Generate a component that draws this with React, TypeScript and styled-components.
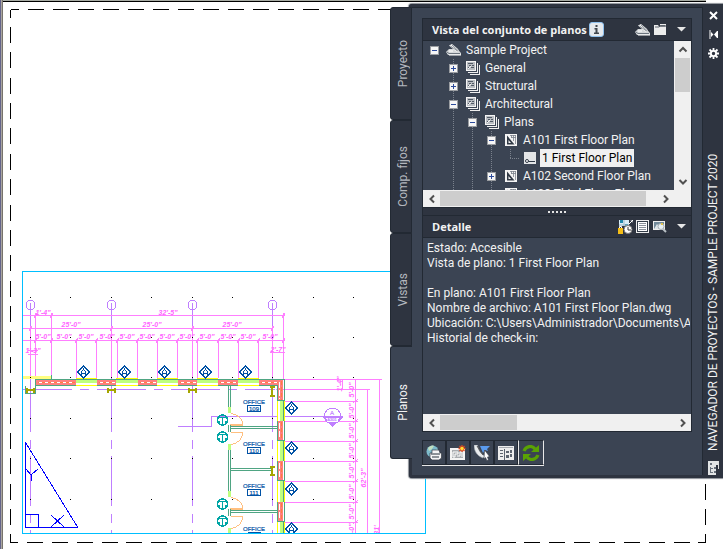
import React from "react";
import styled, { createGlobalStyle, css } from "styled-components";

const c = {
  panel: "#3b4453",
  frame: "#2e3440",
  edge: "#222933",
  text: "#f2f2f2",
  track: "#f0f0f0",
  thumb: "#cdcdcd",
};
const font = `Roboto, "Open Sans", sans-serif`;

const GlobalStyle = createGlobalStyle`
  * { box-sizing: border-box; }
  body { margin: 0; background: #fff; font-family: ${font}; font-size: 12px; }
  button { font: inherit; color: inherit; padding: 0; border: 0; background: none; }
`;

const Workspace = styled.main`
  position: relative;
  min-height: 100vh;
  overflow: hidden;
`;
const Canvas = styled.svg`
  position: absolute;
  inset: 0;
  width: 100%;
  height: 100%;
  display: block;
`;
const Palette = styled.section`
  position: absolute;
  top: 4px;
  left: 390px;
  right: 0;
  display: flex;
  align-items: flex-start;
  color: ${c.text};
`;
const TabList = styled.div`
  position: relative;
  z-index: 1;
  width: 22px;
  margin: 3px -3px 0 0;
  display: flex;
  flex-direction: column;
`;
const Tab = styled.button<{ $active?: boolean }>`
  height: 113px;
  padding-left: 3px;
  display: flex;
  align-items: center;
  justify-content: center;
  border: 1px solid ${c.edge};
  border-radius: 3px 0 0 3px;
  background: ${c.frame};
  color: #b4b8bf;
  span {
    writing-mode: vertical-rl;
    transform: rotate(180deg);
    font-size: 12px;
    line-height: 16px;
  }
  ${(p) =>
    p.$active &&
    css`
      background: ${c.panel};
      border-right: 0;
      color: ${c.text};
    `}
`;
const Body = styled.div`
  flex: 1;
  min-width: 0;
  display: flex;
  border: 3px solid ${c.frame};
  border-right: 0;
  border-radius: 3px 0 0 3px;
  background: ${c.frame};
  box-shadow: 0 0 1px 1px #8b8f96;
`;
const Main = styled.div`
  flex: 1;
  min-width: 0;
  padding: 10px 10px 9px;
  background: ${c.panel};
  border-top: 1px solid ${c.edge};
  border-right: 1px solid ${c.edge};
`;
const Strip = styled.aside`
  width: 20px;
  display: flex;
  flex-direction: column;
  align-items: center;
  gap: 2px;
`;
const StripButton = styled.button`
  width: 17px;
  height: 17px;
  display: grid;
  place-items: center;
`;
const StripTitle = styled.h1`
  flex: 1;
  margin: 0;
  padding-top: 8px;
  writing-mode: vertical-rl;
  transform: rotate(180deg);
  font-weight: 400;
  font-size: 12px;
  line-height: 18px;
  white-space: nowrap;
`;
const Panels = styled.div`
  border: 1px solid ${c.edge};
`;
const Header = styled.header`
  height: 22px;
  padding: 0 3px 0 9px;
  display: flex;
  align-items: center;
  gap: 2px;
  background: ${c.frame};
  border-bottom: 1px solid ${c.edge};
`;
const Heading = styled.h2`
  margin: 0;
  font-family: "Open Sans", sans-serif;
  font-size: 11px;
  font-weight: 700;
  white-space: nowrap;
`;
const HeaderTools = styled.div`
  margin-left: auto;
  display: flex;
  align-items: center;
  gap: 2px;
`;
const IconButton = styled.button`
  display: grid;
  place-items: center;
  width: 15px;
  height: 16px;
`;
const MenuButton = styled(IconButton)`
  margin-left: 6px;
  width: 13px;
`;
const TreeArea = styled.div`
  height: 149px;
  display: flex;
  background: ${c.panel};
`;
const Tree = styled.ul`
  flex: 1;
  min-width: 0;
  margin: 0;
  padding: 0 0 0 2px;
  list-style: none;
  overflow: hidden;
`;
const Row = styled.li`
  height: 18px;
  display: flex;
  align-items: center;
`;
const dots = `#7b828d 0 1px, transparent 1px 2px`;
const Guide = styled.span<{ $line?: boolean; $elbow?: boolean }>`
  flex: none;
  width: 19px;
  height: 18px;
  display: grid;
  place-items: center;
  background-repeat: no-repeat;
  ${(p) =>
    p.$line &&
    css`
      background-image: repeating-linear-gradient(to bottom, ${dots});
      background-size: 1px 18px;
      background-position: 9px 0;
    `}
  ${(p) =>
    p.$elbow &&
    css`
      background-image: repeating-linear-gradient(to bottom, ${dots}),
        repeating-linear-gradient(to right, ${dots});
      background-size: 1px 9px, 10px 1px;
      background-position: 9px 0, 9px 9px;
    `}
`;
const Toggle = styled.button`
  width: 9px;
  height: 9px;
  display: grid;
  background: #f4f4f4;
  svg { display: block; }
`;
const NodeIcon = styled.span`
  flex: none;
  width: 19px;
  height: 18px;
  display: grid;
  place-items: center;
`;
const Label = styled.span<{ $selected?: boolean }>`
  margin-left: 1px;
  padding: 0 2px;
  line-height: 18px;
  white-space: nowrap;
  ${(p) => p.$selected && css`background: #f0f0f0; color: #000;`}
`;
const HBar = styled.div`
  height: 17px;
  display: flex;
  align-items: center;
  background: ${c.track};
`;
const VBar = styled.div`
  width: 17px;
  display: flex;
  flex-direction: column;
  background: ${c.track};
`;
const Arrow = styled.button`
  width: 17px;
  height: 17px;
  display: grid;
  place-items: center;
`;
const HTrack = styled.div`
  flex: 1;
  height: 15px;
`;
const HThumb = styled.div<{ $size: string }>`
  width: ${(p) => p.$size};
  height: 100%;
  background: ${c.thumb};
`;
const VTrack = styled.div`
  flex: 1;
  padding: 0 1px;
`;
const VThumb = styled.div`
  height: 34px;
  background: ${c.thumb};
`;
const Corner = styled.div`
  width: 17px;
`;
const Splitter = styled.div`
  height: 9px;
  display: flex;
  align-items: center;
  justify-content: center;
  gap: 2px;
  background: ${c.frame};
  border: solid ${c.edge};
  border-width: 1px 0;
  i { width: 2px; height: 2px; background: #e4e4e4; }
`;
const Detail = styled.div`
  height: 176px;
  padding: 3px 1px 0 4px;
  overflow: hidden;
  background: ${c.panel};
  p { margin: 0; min-height: 15px; line-height: 15px; white-space: nowrap; overflow: hidden; }
`;
const Toolbar = styled.div`
  margin-top: 8px;
  width: max-content;
  display: flex;
  border-bottom: 1px solid #e8e8e8;
`;
const ToolButton = styled.button<{ $raised?: boolean }>`
  width: 24px;
  height: 25px;
  display: grid;
  place-items: center;
  border: 1px solid ${c.edge};
  ${(p) =>
    p.$raised &&
    css`
      width: 26px;
      border-color: ${c.edge} #e8e8e8;
    `}
`;

/* ---------- icons ---------- */

const Chevron = ({ dir }: { dir: "left" | "right" | "up" | "down" }) => {
  const d = {
    left: "M7 1.5 3.5 5 7 8.5",
    right: "M3 1.5 6.500 5 3 8.500",
    up: "M1.500 6.500 5 3 8.500 6.500",
    down: "M1.500 3 5 6.500 8.500 3",
  }[dir];
  return (
    <svg width="10" height="10" viewBox="0 0 10 10">
      <path d={d} fill="none" stroke="#505050" strokeWidth="2" />
    </svg>
  );
};
const Caret = () => (
  <svg width="9" height="5" viewBox="0 0 9 5"><path d="M0 0h9L4.500 4.500z" fill="#e6e6e6" /></svg>
);
const ToggleGlyph = ({ open }: { open: boolean }) => (
  <svg width="9" height="9" shapeRendering="crispEdges">
    <rect x=".5" y=".5" width="8" height="8" fill="#f6f6f6" stroke="#9a9da1" />
    <path d={open ? "M2 4.500h5" : "M2 4.500h5M4.500 2v5"} stroke="#2b4a9b" />
  </svg>
);
const ProjectIcon = () => (
  <svg width="15" height="12" viewBox="0 0 15 12">
    <path d="M0 8 3 5h8l4 4v2H2z" fill="#d5d8da" />
    <path d="m1 8 2 1.500h11" stroke="#6c747e" fill="none" />
    <path d="M3 1.500 6 0l6 5 1.500 3L10 7.500z" fill="#f4f4f4" />
    <path d="m4.500 2 7 5M6 1l6.500 6" stroke="#5c6570" strokeWidth=".7" />
    <path d="M3 7h4M3 11h12" stroke="#fff" />
  </svg>
);
const SubsetIcon = () => (
  <svg width="14" height="14" shapeRendering="crispEdges">
    <path d="M13.500 4v9.500H4M11.500 2v9.500H2" fill="none" stroke="#f0f0f0" />
    <path d="M0 0h10v10H0z" fill="#f4f4f4" />
    <path d="M1 1h8v8H1z" fill="#b9bdc2" />
    <path d="M2 2h5v1H2zM3 4h2v1H3zM6 4h2v1H6zM2 6h1v2H2zM5 6h3v1H5z" fill="#515a66" />
    <path d="m2 8 3-3" stroke="#f4f4f4" />
  </svg>
);
const SheetIcon = () => (
  <svg width="12" height="12">
    <path d="M0 0h12v12H0z" fill="#f4f4f4" />
    <path d="M2 1.500 9.500 10.500H2z" fill="#303945" />
    <path d="M3.500 6v3h2.500z" fill="#f4f4f4" />
    <path d="M5 1.500h6M6 3.500h5M8.500 1v6M10.500 1v9M6.500 1v3" stroke="#7b828c" strokeWidth=".8" />
  </svg>
);
const ViewIcon = () => (
  <svg width="12" height="12">
    <path d="M0 0h12v12H0z" fill="#e4e6e8" />
    <circle cx="3" cy="9" r="1.500" fill="#fff" stroke="#2f3946" />
    <path d="M4.500 9.500H11" stroke="#2f3946" />
  </svg>
);
const InfoIcon = () => (
  <svg width="15" height="15" viewBox="0 0 15 15">
    <rect x=".5" y=".5" width="14" height="14" rx="2.500" fill="#e5e9ed" stroke="#8fc1ef" />
    <path d="M6.500 3h2v2h-2zM5.500 6h3v4.500h1.500V12H5v-1.500h1.500v-3h-1z" fill="#41474e" />
  </svg>
);
const FolderIcon = () => (
  <svg width="12" height="11" viewBox="0 0 12 11">
    <path d="M0 1h4l1 1.500h7V11H0z" fill="#ededed" />
    <path d="M6 0h6v1.500H6z" fill="#ededed" />
    <path d="M1 3h4l1.500-1.200H11" stroke="#3a424e" strokeWidth=".8" fill="none" />
  </svg>
);
const StatusIcon = () => (
  <svg width="15" height="14" viewBox="0 0 15 14">
    <path d="M1 0h10v6H1z" fill="#d9edf7" />
    <path d="M2 0h3v3H2zM7 4h3v3H7z" fill="#1f88ad" />
    <path d="M1 5h10M6 0v6" stroke="#9fb9c7" />
    <path d="M0 8h5v6H0z" fill="#f4bd16" /><path d="M1.500 8V6.500h2V8" stroke="#fff" fill="none" />
    <circle cx="10" cy="9.500" r="4" fill="#fff" stroke="#777" />
    <path d="M10 7v3h3" stroke="#333" fill="none" />
    <path d="M11 4 15 0M12.500 0H15v2.500" stroke="#fff" fill="none" />
  </svg>
);
const DetailIcon = () => (
  <svg width="13" height="13" shapeRendering="crispEdges">
    <path d="M0 0h13v13H0z" fill="#eee" /><rect x="1.500" y="1.500" width="10" height="10" fill="#fff" stroke="#343d49" />
    <path d="M3 3.500h7M3 5.500h7M3 7.500h7M3 9.500h7" stroke="#8a9099" />
  </svg>
);
const PreviewIcon = () => (
  <svg width="14" height="13" viewBox="0 0 14 13">
    <path d="M0 1h12v9H0z" fill="#eee" /><path d="M1 2h10v7H1z" fill="#71899a" />
    <path d="m1 9 3-5 4 5z" fill="#dce4e8" />
    <circle cx="8" cy="6.500" r="3" fill="#e8f0f3" stroke="#a5adb3" /><path d="m10 9 3 3" stroke="#b9c0c5" strokeWidth="2" />
    <path d="M8 3h2v2H8z" fill="#e2c34d" />
  </svg>
);
const CloseIcon = () => (
  <svg width="9" height="9"><path d="m1 1 7 7M8 1 1 8" stroke="#fff" strokeWidth="2" /></svg>
);
const HideIcon = () => (
  <svg width="9" height="9"><path d="M1 0v9M8.500 1v7" stroke="#fff" /><path d="M2 2v5l2.500-2.500zM8 1v7L5 4.500z" fill="#fff" /></svg>
);
const GearIcon = () => (
  <svg width="11" height="11" viewBox="0 0 11 11">
    <path d="M5.500 0v11M0 5.500h11M1.500 1.500l8 8M9.500 1.500l-8 8" stroke="#fff" strokeWidth="1.800" />
    <circle cx="5.500" cy="5.500" r="2.600" fill={c.frame} stroke="#fff" strokeWidth="1.800" />
  </svg>
);
const NavigatorIcon = () => (
  <svg width="11" height="14" shapeRendering="crispEdges">
    <path d="M0 0h11v4H8v10H0z" fill="#e2e4e5" /><path d="M10 0v8" stroke="#ddd" />
    <path d="M2 2h2v2H2zM2 6h1v6H2zM6 6h2v2H6zM6 10h2v2H6zM3 7h2v1H3zM3 11h2v1H3z" fill="#68707b" />
  </svg>
);
const PublishIcon = () => (
  <svg width="16" height="16" viewBox="0 0 16 16">
    <circle cx="6.500" cy="6.500" r="6" fill="#7dbbcb" />
    <path d="M2 3c2-2 4-3 6-2L6 4 3 6zM7 7l4-3 1 3-3 2z" fill="#c0dfc0" />
    <path d="M6 5h7l1 3h1.500v5L13 15H6l-2-2V8h2z" fill="#f5f5f5" stroke="#343b45" strokeWidth=".7" />
    <path d="M5 9h9M6 12h7" stroke="#27303b" />
  </svg>
);
const NewSheetIcon = () => (
  <svg width="16" height="16" viewBox="0 0 16 16">
    <path d="M0 3h15v12H0z" fill="#f4f4f4" /><path d="M2 5h11v8H2z" fill="#a9adb1" />
    <path d="M3 7h5v2H5v3H3zM7 11h3V7h2v5" fill="none" stroke="#fff" />
    <path d="M12 0v7M8.500 3.500h7M9.500 1l5 5M14.500 1l-5 5" stroke="#e3481d" strokeWidth="1.300" /><circle cx="12" cy="3.500" r="1.700" fill="#ffdc34" />
  </svg>
);
const EtransmitIcon = () => (
  <svg width="16" height="16" viewBox="0 0 16 16">
    <path d="M0 0c0 6 3 11 9 13l2-2C7 9 4 5 3.500 0z" fill="#e8ebed" stroke="#9aa2a9" strokeWidth=".6" />
    <path d="m3 1 6 9" stroke="#555" /><path d="M6 1h10l-3 3 1 2-3-1-2 3z" fill="#5a9bee" />
    <path d="m10.500 5 5 6.500-2 .5 1 3-1.700.6-1.200-3-1.600 1.400z" fill="#fff" stroke="#353d48" strokeWidth=".6" />
  </svg>
);
const LayoutIcon = () => (
  <svg width="16" height="14" shapeRendering="crispEdges">
    <path d="M0 0h16v14H0z" fill="#eee" /><path d="M1 1h14v1H1z" fill="#a9adb1" />
    <path d="M2 4h3v1H2zM2 7h3v1H2zM2 10h3v1H2zM6 3h1v11H6zM8 5h3v2H8zM12 4h2v3h-2zM8 9h3v3H8zM12 8h2v3h-2z" fill="#5c646f" />
  </svg>
);
const RefreshIcon = () => (
  <svg width="18" height="16" viewBox="0 0 18 16">
    <path d="M2 6C4 1 10 0 13 4M16 10c-2 5-8 6-11 2" fill="none" stroke="#5aa303" strokeWidth="3.200" />
    <path d="M17 0v7H9zM1 16V9h8z" fill="#5aa303" />
  </svg>
);

/* ---------- drawing ---------- */

const MAG = "#ff7fff";
const PUR = "#bf7fff";
const GRN = "#4fa583";
const BLU = "#0052a5";
const gridX = [30, 111, 192, 272];
const dimX = [35, 51, 76, 96, 117, 137, 157, 177, 197, 218, 238, 258, 283];
const dimY = [401, 421, 441, 461, 481, 502, 522];
const hWalls = [[36, 76], [97, 116], [138, 157], [178, 197], [218, 238], [259, 283]];
const hWindows = [[76, 97], [116, 138], [157, 178], [197, 218], [238, 259]];
const vWalls = [[380, 401], [421, 441], [461, 481], [502, 522]];
const vWindows = [[401, 421], [441, 461], [481, 502], [522, 533]];

const DimText = ({ x, y, t, up }: { x: number; y: number; t: string; up?: boolean }) => (
  <text x={x} y={y} textAnchor="middle" transform={up ? `rotate(-90 ${x} ${y})` : undefined}>{t}</text>
);
const WindowTag = ({ x, y }: { x: number; y: number }) => (
  <g fill="none" stroke={BLU} shapeRendering="crispEdges">
    <path d={`M${x + 0.5} ${y - 6}l6 6-6 6-6-6z`} />
    <path d={`M${x - 1.5} ${y + 3}v-3l2-3 2 3v3m-4-2h4`} />
  </g>
);
const Drawing = () => (
  <Canvas viewBox="0 0 723 549" preserveAspectRatio="xMinYMin slice" role="img" aria-label="First Floor Plan">
    <defs><clipPath id="vp"><path d="M22 271h404v262H22z" /></clipPath></defs>
    <g shapeRendering="crispEdges">
      <path d="M3 0h703v1H3z" fill="#a7aba3" />
      <path d="M3 1h703v1H3z" />
      <path d="M0 0h1v549H0z" fill="#64648a" /><path d="M1 0h1v549H1z" fill="#aaa6a0" /><path d="M2 0h1v549H2z" fill="#77736c" />
      <g fill="none" stroke="#000">
        <path d="M10.500 18V10M11 9.500h8M10.500 534v8M10 542.500h8M705.500 534v9M698 542.500h8" />
        <path d="M28 9.500H398" strokeDasharray="16 9" />
        <path d="M10.500 27V530" strokeDasharray="16 9.370" />
        <path d="M27 542.500H694" strokeDasharray="16 8.870" />
        <path d="M705.500 484v46" strokeDasharray="16 9" />
      </g>
    </g>
    <g clipPath="url(#vp)">
      <g shapeRendering="crispEdges" fill="none">
        <g stroke={PUR}>
          {gridX.map((x) => <path key={x} d={`M${x + 0.5} 303V432m0 8v9m0 7v50m0 8v9m0 7v4`} />)}
          <path d="M23 389.500h252" strokeDasharray="49 8 9 8" />
          <path d="M178 426.500h33v-10h132" />
        </g>
        <g stroke={MAG}>
          <path d="M23 315.500h262M23 328.500h250M23 340.500h262M270 352.500h15M28 350.500h10M28 354.500h10" />
          {dimX.map((x, i) => <path key={x} d={`M${x + 0.5} ${i < 2 || i === 12 ? 313 : 340}v${i < 2 || i === 12 ? 66 : 38}`} />)}
          {gridX.map((x) => <path key={x} d={`M${x + 0.5} 326V378`} />)}
          <path d="M285 379.500h97M276 389.500h94M342.500 379v11M355.500 379v154M367.500 389v144M379.500 379v154" />
          {dimY.map((y) => <path key={y} d={`M285 ${y + 0.5}h73M353 ${y + 2}l5-4`} />)}
          {dimX.map((x) => <path key={x} d={`M${x - 1} 343l3-5`} />)}
          {[35, 51, 283].map((x) => <path key={x} d={`M${x - 1} 318l3-5`} />)}
          {gridX.map((x) => <path key={x} d={`M${x - 1} 331l3-5`} />)}
        </g>
        <path d="M23 376h28v3H23z" fill="#ffff7f" />
        <path d="M35 379.500h249v154M35 385.500h242v148M35.500 379v7M51 375v4" stroke={GRN} />
        {hWalls.map(([a, b]) => (
          <g key={a}>
            <path d={`M${a} 380h${b - a}v5H${a}z`} fill="#ff7f7f" />
            <path d={`M${a + 2} 382.500H${b - 1}`} stroke="#ff7f3f" />
            <path d={`M${a + 3} 382.500H${b - 1}`} stroke="#fff" strokeDasharray="3 3" />
          </g>
        ))}
        {hWindows.map(([a, b]) => (
          <g key={a}>
            <path d={`M${a} 380h${b - a}v6H${a}z`} fill="#fff" />
            <path d={`M${a} 380h${b - a}v3H${a}z`} fill="#bfff7f" />
            <path d={`M${a} 378.500h${b - a}M${a} 385.500h${b - a}`} stroke="#ff0" />
            <path d={`M${a} 379.500h${b - a}`} stroke={GRN} />
          </g>
        ))}
        {vWalls.map(([a, b]) => (
          <g key={a}>
            <path d={`M278 ${a}h5V${b}h-5z`} fill="#ff7f7f" />
            <path d={`M281.500 ${a + 1}V${b - 1}`} stroke="#ff7f3f" strokeDasharray="4 2" />
            <path d={`M279.500 ${a + 2}V${b - 2}`} stroke="#fff" strokeDasharray="6 2" />
            <path d={`M277 ${b - 0.5}h7`} stroke={GRN} />
          </g>
        ))}
        {vWindows.map(([a, b]) => (
          <g key={a}>
            <path d={`M277 ${a}h7V${b}h-7z`} fill="#fff" />
            <path d={`M280 ${a}h3V${b}h-3z`} fill="#bfff7f" />
            <path d={`M283.500 ${a}V${b}`} stroke={GRN} />
            <path d={`M277.500 ${a}V${b}M284.500 ${a}V${b}`} stroke="#ff0" />
          </g>
        ))}
        <g stroke={GRN}>
          <path d="M228.500 386v21M230.500 386v21M228.500 425v7M230.500 425v7M228.500 450v41M230.500 450v41M228.500 509v7M230.500 509v7" />
          <path d="M231 426.500h46M231 428.500h46M231 468.500h40M231 470.500h40M231 510.500h46M231 512.500h46M25.500 386v7h10v-7" />
        </g>
        <path d="M228 407h3v6h-3zM228 444h3v6h-3zM228 491h3v6h-3zM228 528h3v6h-3z" fill="#bfff7f" />
        <g stroke="#ffbf7f">
          <path d="M231 413.500q11 2 12 11h-13M231 444.500q11-2 12-12h-12M231 497.500q11 2 12 11h-13M231 528.500q11-2 12-12h-12M231 425.500h12M231 509.500h12" />
        </g>
        <g stroke="#a5a500">
          {[30, 111, 192].map((x) => <path key={x} d={`M${x - 4} 390h9`} strokeWidth="2" />)}
          {[30, 111, 192].map((x) => <path key={x} d={`M${x - 3} 388v5M${x + 4} 388v5`} strokeWidth="2" />)}
          <path d="M272 387v9M272 467v9M270 387h5M270 396h5M270 467h5M270 475h5" strokeWidth="2" />
        </g>
        <g stroke={BLU}>
          <path d="M247.500 405.500h13v6h-13zM247.500 447.500h13v6h-13zM247.500 489.500h13v6h-13zM247.500 532.500h13" />
        </g>
        <path d="M25.500 442.500l52 84.500H25.500zM25.500 514.500h13v13M26 469l5 6 7-6M31.500 475v6M51 515l13 12M64 515l-13 12" stroke="#00f" />
        {[297, 337, 377, 418, 458, 499].map((y) =>
          [30, 70, 111, 151, 192, 232, 272, 313, 353].map((x) => <path key={`${x}-${y}`} d={`M${x} ${y}h1v1h-1z`} fill="#000" />)
        )}
      </g>
      <g fill="none" stroke={PUR} shapeRendering="crispEdges">
        {gridX.map((x) => <circle key={x} cx={x + 0.5} cy="305" r="4.500" />)}
        <circle cx="332.500" cy="416" r="8" />
        <path d="M323 417h20l-10.500 9z" fill={PUR} />
        <path d="M325 417h15l-2 5h-11z" fill="#fff" />
      </g>
      {[83, 124, 164, 205, 245].map((x) => <WindowTag key={x} x={x} y={372} />)}
      {[408, 448, 489, 529].map((y) => <WindowTag key={y} x={291} y={y} />)}
      <g fill="none" stroke="#00a5a5" shapeRendering="crispEdges">
        {[420, 437, 504, 521].map((y) => (
          <g key={y}><circle cx="222.500" cy={y} r="5" strokeWidth="1.500" /><path d={`M219 ${y - 2.5}h7M222.500 ${y - 2}v6M219.500 ${y + 1}v2M225.500 ${y + 1}v2`} /></g>
        ))}
      </g>
      <g fontFamily="Liberation Sans, sans-serif" fontSize="7" fontStyle="italic" fontWeight="700" fill="#ff66ff">
        <DimText x={43} y={315} t="1'-4&quot;" /><DimText x={168} y={315} t="32'-5&quot;" />
        {[71, 152, 232].map((x) => <DimText key={x} x={x} y={327} t="25'-0&quot;" />)}
        {[43, 64, 86, 107, 127, 147, 167, 187, 207, 228, 248, 270].map((x) => <DimText key={x} x={x} y={339} t="5'-0&quot;" />)}
        <DimText x={33} y={353} t="1'-3&quot;" /><DimText x={278} y={352} t="2'-7&quot;" />
        {[390, 411, 431, 451, 471, 492, 512, 531].map((y) => <DimText key={y} x={354} y={y} t="5'-0&quot;" up />)}
        <DimText x={342} y={384} t="1'-4&quot;" up /><DimText x={366} y={478} t="62'-3&quot;" up /><DimText x={379} y={530} t="81'" up />
      </g>
      <g fontFamily="Liberation Sans, sans-serif" fontSize="6" textAnchor="middle" fill={BLU} stroke={BLU} strokeWidth=".2">
        {[404, 446, 488, 531].map((y) => <text key={y} x="254" y={y}>OFFICE</text>)}
        <text x="254" y="411">109</text><text x="254" y="453">110</text><text x="254" y="495">111</text>
        <text x="332" y="415" fill={PUR} stroke={PUR}>A</text><text x="332" y="421" fontSize="4" fill={PUR} stroke={PUR}>A301</text>
      </g>
    </g>
    <path d="M22.500 271.500h403v262h-403z" fill="none" stroke="#00bfff" shapeRendering="crispEdges" />
  </Canvas>
);

/* ---------- palette data ---------- */

type Node = { level: number; label: string; icon: React.ReactNode; open?: boolean; selected?: boolean };
const nodes: Node[] = [
  { level: 0, label: "Sample Project", icon: <ProjectIcon />, open: true },
  { level: 1, label: "General", icon: <SubsetIcon />, open: false },
  { level: 1, label: "Structural", icon: <SubsetIcon />, open: false },
  { level: 1, label: "Architectural", icon: <SubsetIcon />, open: true },
  { level: 2, label: "Plans", icon: <SubsetIcon />, open: true },
  { level: 3, label: "A101 First Floor Plan", icon: <SheetIcon />, open: true },
  { level: 4, label: "1 First Floor Plan", icon: <ViewIcon />, selected: true },
  { level: 3, label: "A102 Second Floor Plan", icon: <SheetIcon />, open: false },
  { level: 3, label: "A103 Third Floor Plan", icon: <SheetIcon />, open: false },
];
const details = [
  "Estado: Accesible",
  "Vista de plano: 1 First Floor Plan",
  "",
  "En plano: A101 First Floor Plan",
  "Nombre de archivo: A101 First Floor Plan.dwg",
  "Ubicación: C:\\Users\\Administrador\\Documents\\A",
  "Historial de check-in:",
];
const tabs = ["Proyecto", "Comp. fijos", "Vistas", "Planos"];
const tools: [string, React.ReactNode][] = [
  ["Publicar", <PublishIcon />],
  ["Nuevo plano", <NewSheetIcon />],
  ["Transmitir", <EtransmitIcon />],
  ["Propiedades", <LayoutIcon />],
  ["Actualizar", <RefreshIcon />],
];

const TreeRow = ({ node }: { node: Node }) => (
  <Row role="treeitem" aria-level={node.level + 1} aria-expanded={node.open} aria-selected={!!node.selected}>
    {Array.from({ length: node.level }, (_, i) => <Guide key={i} $line={i > 0} />)}
    <Guide $line={node.level > 0 && node.open !== undefined} $elbow={node.open === undefined}>
      {node.open !== undefined && (
        <Toggle aria-label={node.open ? "Contraer" : "Expandir"}><ToggleGlyph open={node.open} /></Toggle>
      )}
    </Guide>
    <NodeIcon>{node.icon}</NodeIcon>
    <Label $selected={node.selected}>{node.label}</Label>
  </Row>
);

export default function App() {
  return (
    <>
      <GlobalStyle />
      <Workspace>
        <Drawing />
        <Palette aria-label="Navegador de proyectos">
          <TabList role="tablist" aria-orientation="vertical">
            {tabs.map((t) => (
              <Tab key={t} role="tab" aria-selected={t === "Planos"} $active={t === "Planos"}><span>{t}</span></Tab>
            ))}
          </TabList>
          <Body>
            <Main>
              <Panels>
                <Header>
                  <Heading>Vista del conjunto de planos</Heading>
                  <InfoIcon />
                  <HeaderTools>
                    <IconButton aria-label="Editar proyecto"><ProjectIcon /></IconButton>
                    <IconButton aria-label="Abrir"><FolderIcon /></IconButton>
                    <MenuButton aria-label="Opciones"><Caret /></MenuButton>
                  </HeaderTools>
                </Header>
                <TreeArea>
                  <Tree role="tree">{nodes.map((n) => <TreeRow key={n.label} node={n} />)}</Tree>
                  <VBar>
                    <Arrow aria-label="Subir"><Chevron dir="up" /></Arrow>
                    <VTrack><VThumb /></VTrack>
                    <Arrow aria-label="Bajar"><Chevron dir="down" /></Arrow>
                  </VBar>
                </TreeArea>
                <HBar>
                  <Arrow aria-label="Izquierda"><Chevron dir="left" /></Arrow>
                  <HTrack><HThumb $size="95%" /></HTrack>
                  <Arrow aria-label="Derecha"><Chevron dir="right" /></Arrow>
                  <Corner />
                </HBar>
                <Splitter><i /><i /><i /><i /><i /></Splitter>
                <Header>
                  <Heading>Detalle</Heading>
                  <HeaderTools>
                    <IconButton aria-label="Estado"><StatusIcon /></IconButton>
                    <IconButton aria-label="Detalles"><DetailIcon /></IconButton>
                    <IconButton aria-label="Vista previa"><PreviewIcon /></IconButton>
                    <MenuButton aria-label="Opciones de detalle"><Caret /></MenuButton>
                  </HeaderTools>
                </Header>
                <Detail>{details.map((d, i) => <p key={i}>{d}</p>)}</Detail>
                <HBar>
                  <Arrow aria-label="Izquierda"><Chevron dir="left" /></Arrow>
                  <HTrack><HThumb $size="33%" /></HTrack>
                  <Arrow aria-label="Derecha"><Chevron dir="right" /></Arrow>
                </HBar>
              </Panels>
              <Toolbar role="toolbar">
                {tools.map(([label, icon], i) => (
                  <ToolButton key={label} aria-label={label} $raised={i === 4}>{icon}</ToolButton>
                ))}
              </Toolbar>
            </Main>
            <Strip>
              <StripButton aria-label="Cerrar"><CloseIcon /></StripButton>
              <StripButton aria-label="Ocultar"><HideIcon /></StripButton>
              <StripButton aria-label="Propiedades"><GearIcon /></StripButton>
              <StripTitle>NAVEGADOR DE PROYECTOS - SAMPLE PROJECT 2020</StripTitle>
              <NavigatorIcon />
            </Strip>
          </Body>
        </Palette>
      </Workspace>
    </>
  );
}
